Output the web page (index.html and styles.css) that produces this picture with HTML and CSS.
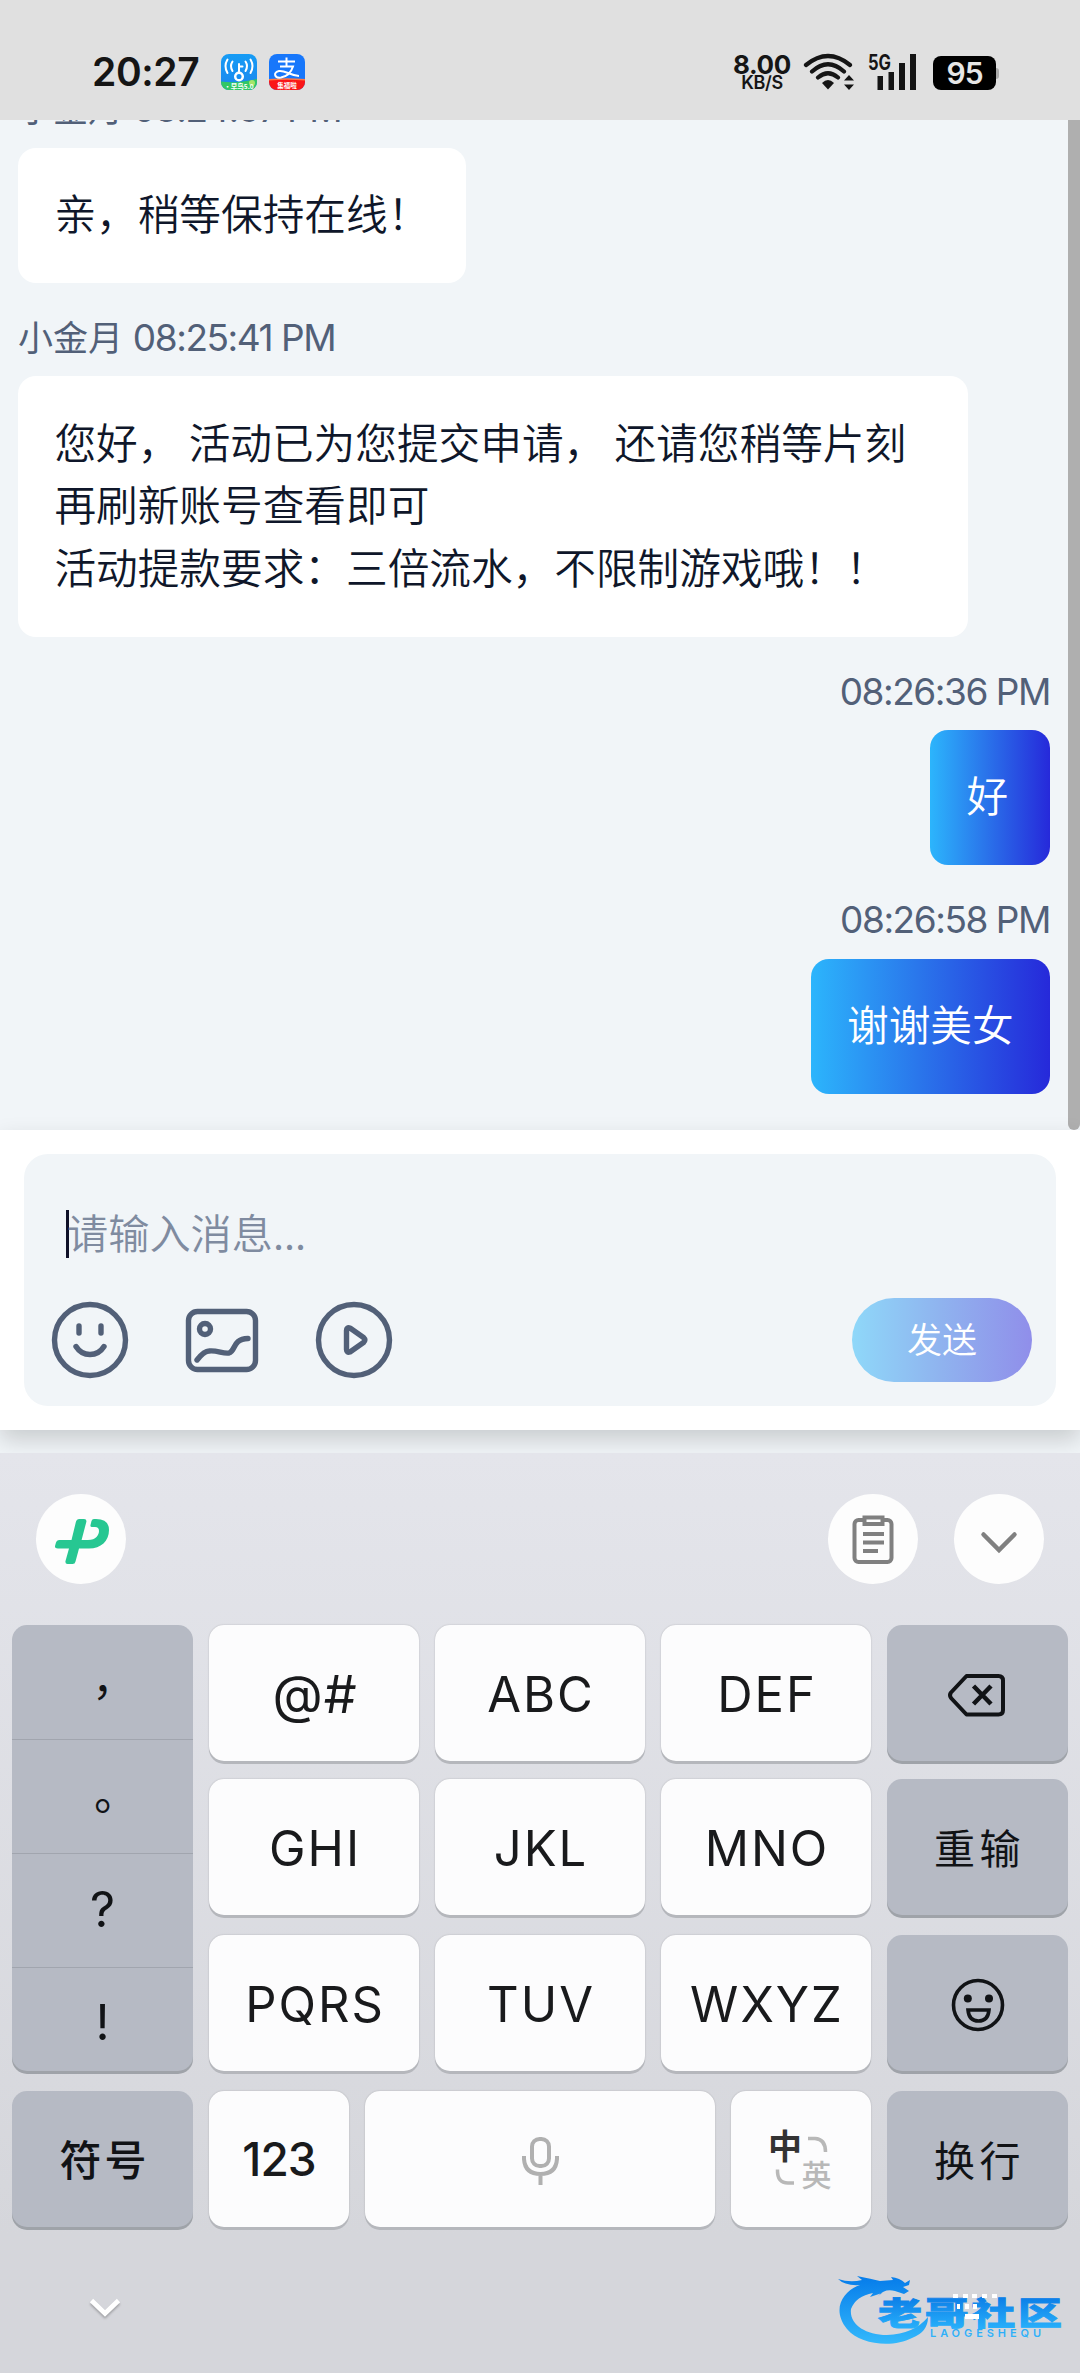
FILE: index.html
```html
<!DOCTYPE html>
<html lang="zh-CN">
<head>
<meta charset="utf-8">
<title>在线客服</title>
<link rel="stylesheet" href="styles.css">
</head>
<body>
<header class="status">
  <span class="clock">20:27</span>
  <svg class="app" viewBox="0 0 36 36">
    <defs>
      <linearGradient id="wifiApp" x1="0" y1="0" x2="0" y2="1"><stop offset="0" stop-color="#169cf5"/><stop offset="1" stop-color="#1c86ee"/></linearGradient>
      <clipPath id="appShape"><rect width="36" height="36" rx="8"/></clipPath>
    </defs>
    <g clip-path="url(#appShape)">
      <rect width="36" height="36" fill="url(#wifiApp)"/>
      <path d="M0 27.500Q14 30 36 25V36H0Z" fill="#32c765"/>
      <circle cx="31" cy="29" r="3" fill="#a5e56a"/>
      <g fill="none" stroke="#fff" stroke-width="2" stroke-linecap="round">
        <path d="M6.500 5.500Q2.500 12 6.500 19M11.500 7.500Q8.500 12 11.500 17M29.500 5.500Q33.500 12 29.500 19M24.500 7.500Q27.500 12 24.500 17"/>
        <circle cx="18" cy="22.500" r="3.800" stroke-width="2.500"/><path d="M18 18.500V10M18 12.500H21.500"/>
      </g>
      <text class="app-tag" x="18" y="34.500">·早鸟5.0</text>
    </g>
  </svg>
  <svg class="app app-pay" viewBox="0 0 36 36">
    <g clip-path="url(#appShape)">
      <rect width="36" height="36" fill="#1777fb"/>
      <path d="M0 26Q18 24 36 26V36H0Z" fill="#fa1518"/>
      <path d="M0 25Q18 23.500 36 25V26.500Q18 25 0 26.500Z" fill="#ff7a45"/>
      <g fill="none" stroke="#fff" stroke-width="2">
        <path d="M17.500 3.500V12M9 7.500H26M11 12.500H24Q21 22 12 23.500C5 24.500 4 18 10 17C16 16 21 21.500 30 22"/>
      </g>
      <text class="app-tag" x="18" y="34">集福啦</text>
    </g>
  </svg>
  <span class="speed"><b>8.00</b><i>KB/S</i></span>
  <svg class="wifi" viewBox="803 53 53 38">
    <g fill="none" stroke="#151515" stroke-width="4.200" stroke-linecap="round">
      <path d="M806 65Q828 47 850 65M812 71.500Q828 57 844 71.500M818 77.500Q828 69 838 77.500"/>
    </g>
    <path d="M822 83Q828 77 834 83L828 89.500Z" fill="#151515"/>
    <path d="M849 75L854 80.500H844ZM849 90L854 84.500H844Z" fill="#151515"/>
  </svg>
  <svg class="signal" viewBox="867 53 51 38">
    <text class="signal-kind" x="868" y="69.500" textLength="23" lengthAdjust="spacingAndGlyphs">5G</text>
    <path d="M877.500 76h5.500v14h-5.500zM888.500 72h5.500v18h-5.500zM899 63h6v27h-6zM910 54h6v36h-6z" fill="#151515"/>
  </svg>
  <span class="battery">95</span>
</header>

<main class="chat">
  <div class="log">
    <div class="label">小金月 <span class="time">08:24:57 PM</span></div>
    <div class="bubble">亲，稍等保持在线！</div>
    <div class="label">小金月 <span class="time">08:25:41 PM</span></div>
    <div class="bubble bubble-wide">您好， 活动已为您提交申请， 还请您稍等片刻<br>再刷新账号查看即可<br>活动提款要求：三倍流水，不限制游戏哦！！</div>
    <div class="label mine"><span class="time">08:26:36 PM</span></div>
    <div class="bubble sent mine">好</div>
    <div class="label mine"><span class="time">08:26:58 PM</span></div>
    <div class="bubble sent mine">谢谢美女</div>
  </div>
  <div class="scrollbar"></div>
</main>

<section class="composer">
  <div class="panel">
    <div class="input"><span class="caret"></span><span class="placeholder">请输入消息...</span></div>
    <div class="tools">
      <svg class="tool" viewBox="0 0 80 80"><circle cx="40" cy="40" r="35.500"/><path d="M29 26v7M51 26v7M26 46.500Q31 54.500 40 54.500T54 46.500"/></svg>
      <svg class="tool" viewBox="0 0 80 80"><rect x="6.500" y="11.500" width="67" height="58" rx="9"/><circle cx="23" cy="29" r="5.500"/><path d="M15 60Q22 51 27 51C35 50 41 54 47 53C54 51 50 39 66 38.500"/></svg>
      <svg class="tool" viewBox="0 0 80 80"><circle cx="40" cy="40" r="35.500"/><path d="M32.500 30.500Q32.500 27 36 28L49.500 37.500Q52 40 49.500 42.500L36 52Q32.500 53 32.500 49.500Z"/></svg>
      <button class="send">发送</button>
    </div>
  </div>
</section>

<section class="keyboard">
  <div class="bar">
    <span class="round"><svg viewBox="36 1494 90 90" fill="#27c792"><path d="M79 1519H84Q87 1519 86.300 1522L81.600 1540H88C96 1540 99 1535 99 1531Q99 1527 95 1527H92Q90 1527 90.500 1525L91.500 1521Q92 1519 94 1519H96Q109 1519 109 1530C109 1541 101 1548.500 89 1548.500H79L75.500 1561.500Q75 1564 72.500 1564H67.500Q65 1564 65.500 1561L69 1548.500H58Q54.500 1548.500 55 1546L56 1542.500Q56.500 1540 59 1540H71.500L76 1521.500Q76.500 1519 79 1519Z"/></svg></span>
    <span class="round clip"><svg viewBox="828 1494 90 90" fill="none" stroke="#808080" stroke-width="4"><rect x="854.500" y="1520" width="37" height="42" rx="4"/><rect x="864.500" y="1517.500" width="18" height="6.500" fill="#fff" stroke-width="4"/><path d="M863 1534H884M863 1542.500H884M863 1551H878"/></svg></span>
    <span class="round"><svg viewBox="954 1494 90 90" fill="none" stroke="#808080" stroke-width="4.500" stroke-linecap="round"><path d="M983.500 1534.500L999 1550L1014.500 1534.500"/></svg></span>
  </div>
  <div class="keys">
    <div class="key dark marks">
      <span class="cjk-mark">，</span><span class="cjk-mark stop">。</span><span>?</span><span class="bang">!</span>
    </div>
    <div class="key at">@#</div><div class="key">ABC</div><div class="key">DEF</div>
    <div class="key dark"><svg class="glyph" viewBox="940.500 1663 74 60" fill="none" stroke="#111316" stroke-width="4" stroke-linejoin="round"><path d="M965 1675H997Q1001.500 1675 1001.500 1679.500V1709Q1001.500 1713.500 997 1713.500H965L949.500 1697Q947.500 1694 949.500 1691.500Z"/><path d="M972 1685L989.500 1703M989.500 1685L972 1703" stroke-width="4.500"/></svg></div>
    <div class="key">GHI</div><div class="key">JKL</div><div class="key">MNO</div>
    <div class="key dark word">重输</div>
    <div class="key">PQRS</div><div class="key">TUV</div><div class="key">WXYZ</div>
    <div class="key dark"><svg class="glyph" viewBox="940.500 1973 74 60" fill="none" stroke="#111316" stroke-width="3.600"><circle cx="976.500" cy="2004" r="24.500"/><circle cx="966.300" cy="1997.500" r="4" fill="#111316" stroke="none"/><circle cx="987.500" cy="1997.500" r="4" fill="#111316" stroke="none"/><path d="M966.500 2009H987.500Q986.500 2020 977 2020T966.500 2009Z"/></svg></div>
  </div>
  <div class="keys-bottom">
    <div class="key dark word side symbols">符号</div>
    <div class="key num">123</div>
    <div class="key space"><svg class="mic" viewBox="515 2130 50 60" fill="none" stroke="#b0b0b0" stroke-width="4"><rect x="532" y="2140" width="17" height="27" rx="7.500"/><path d="M524 2157V2160Q525 2175 540.500 2175T557 2160V2157M540.500 2175V2186"/></svg></div>
    <div class="key lang"><svg class="lang-icon" viewBox="731 2091 140 136"><text class="lang-on" x="785" y="2159">中</text><text class="lang-off" x="816.500" y="2186">英</text><path d="M808 2138.500H815Q825.500 2139 825.500 2152M777.500 2169.500Q777 2183 788 2183H794" fill="none" stroke="#b8b8b8" stroke-width="3.500"/></svg></div>
    <div class="key dark word side">换行</div>
  </div>
  <footer class="nav">
    <svg class="hide" viewBox="0 0 40 30" fill="none" stroke="#fff" stroke-width="4.800"><path d="M6.500 6.500L20 19.500L33.500 6.500"/></svg>
    <svg class="brand" viewBox="832 2270 236 80">
      <defs>
        <linearGradient id="brandBlue" gradientUnits="userSpaceOnUse" x1="0" y1="2280" x2="0" y2="2342"><stop offset="0" stop-color="#087feb"/><stop offset="1" stop-color="#32b7fb"/></linearGradient>
        <linearGradient id="nameBlue" gradientUnits="userSpaceOnUse" x1="0" y1="-36" x2="0" y2="4"><stop offset="0" stop-color="#0d80e8"/><stop offset="1" stop-color="#27aefa"/></linearGradient>
      </defs>
      <g fill="url(#brandBlue)">
        <path d="M838 2279Q850 2283 862 2280L857 2276Q872 2279 880 2281L893 2280L891 2277Q900 2278 905 2283L910 2280L909 2285L903 2287L909 2291L904 2294L895 2291Q885 2288 878 2296L882 2293L870 2297L873 2293Q856 2296 851 2309C849 2324 865 2335 887 2335Q914 2334 928 2317Q928 2332 912 2338C893 2348 860 2345 847 2329C831 2309 843 2291 860 2285Q845 2286 838 2279Z"/>
        <g transform="translate(0 2324.500) scale(1 .72)"><text class="brand-name" x="878" y="0" textLength="184" fill="url(#nameBlue)" stroke="url(#nameBlue)">老哥社区</text></g>
        <text class="brand-sub" x="930" y="2337" textLength="111">LAOGESHEQU</text>
      </g>
      <path d="M953 2294h5v4h-5zM963 2294h5v4h-5zM972 2294h5v4h-5zM982 2294h5v4h-5zM992 2294h5v4h-5zM957 2304h3v5h-3zM965 2304h4v5h-4zM973 2304h4v5h-4zM965 2314h14v5h-14z" fill="#fff"/>
    </svg>
  </footer>
</section>
</body>
</html>
```
FILE: styles.css
```css
* { box-sizing: border-box; }
body {
  margin: 0;
  width: 1080px;
  height: 2373px;
  overflow: hidden;
  display: flex;
  flex-direction: column;
  font-family: Inter, "Noto Sans CJK SC", sans-serif;
  background: #f1f5f8;
}
svg { display: block; flex: none; }

/* status bar */
.status {
  flex: none;
  height: 120px;
  padding: 24px 81px 0 92px;
  display: flex;
  align-items: center;
  background: #e0e0e0;
  color: #151515;
}
.clock { width: 129px; font-size: 39px; font-weight: 600; letter-spacing: -.4px; line-height: 40px; }
.app { width: 36px; height: 36px; }
.app-pay { margin-left: 12px; }
.app-tag { font: 700 6.5px "Noto Sans CJK SC", sans-serif; fill: #fff; text-anchor: middle; }
.speed { margin-left: auto; width: 60px; display: flex; flex-direction: column; align-items: center; }
.speed b { font-size: 26px; line-height: 21px; font-weight: 700; letter-spacing: -.3px; }
.speed i { font-style: normal; font-size: 18px; line-height: 16px; font-weight: 600; letter-spacing: -.4px; }
.wifi { width: 53px; height: 38px; margin-left: 11px; }
.signal { width: 51px; height: 38px; margin-left: 11px; }
.signal-kind { font: 700 21px Inter, sans-serif; fill: #151515; }
.battery {
  position: relative;
  margin: 2px 3px 0 15px;
  width: 63px;
  height: 34px;
  border-radius: 8px;
  background: #000;
  color: #e6e6e6;
  font-size: 30px;
  font-weight: 600;
  letter-spacing: -1px;
  line-height: 35px;
  text-align: center;
}
.battery::after {
  content: "";
  position: absolute;
  left: 63px;
  top: 12px;
  width: 3px;
  height: 11px;
  border-radius: 0 3px 3px 0;
  background: #aaa;
}

/* conversation */
.chat { flex: none; height: 1010px; display: flex; overflow: hidden; background: #f1f5f8; }
.log {
  flex: 1;
  padding: 0 18px 36px;
  display: flex;
  flex-direction: column;
  justify-content: flex-end;
  align-items: flex-start;
}
.label { flex: none; margin: 29px 0 12.4px; height: 52px; line-height: 52px; font-size: 35px; color: #526078; white-space: pre; }
.time { font-size: 37px; letter-spacing: -1.45px; }
.bubble {
  flex: none;
  padding: 33.4px 36.4px 39.4px;
  border-radius: 18px;
  background: #fff;
  color: #0f172a;
  font: 350 41.67px/62.5px "Noto Sans CJK SC", sans-serif;
  white-space: nowrap;
}
.bubble-wide { width: 950px; }
.mine { align-self: flex-end; }
.sent { min-width: 120px; color: #fff; background: linear-gradient(90deg, #2cb5fc, #2a76eb 45%, #2629da); }
.scrollbar { width: 12px; border-radius: 0 0 6px 6px; background: #afafaf; }

/* composer */
.composer {
  position: relative;
  flex: none;
  height: 300px;
  padding: 24px;
  background: #fff;
  box-shadow: 0 10px 22px rgba(0, 0, 0, .17);
}
.panel { height: 252px; border-radius: 24px; background: #f1f5f8; padding: 48px 24px 24px 42px; }
.input { display: flex; align-items: center; height: 64px; color: #7f8ba0; font: 350 41.2px/62px "Noto Sans CJK SC", sans-serif; }
.caret { width: 3px; height: 48px; background: #0f1028; }
.placeholder { margin: -7px 0 0 -2px; }
.tools { display: flex; align-items: center; margin: 32px 0 0 -16px; }
.tool { width: 80px; height: 80px; margin-right: 52px; fill: none; stroke: #526078; stroke-width: 5.4; stroke-linecap: round; stroke-linejoin: round; }
.send {
  margin-left: auto;
  width: 180px;
  height: 84px;
  padding: 0 0 5px;
  border: 0;
  border-radius: 42px;
  color: #fff;
  font: 350 35px "Noto Sans CJK SC", sans-serif;
  background: linear-gradient(90deg, #8fd8f9, #8fb4ef 48%, #908eea);
}

/* keyboard */
.keyboard {
  position: relative;
  flex: none;
  margin-top: 23px;
  height: 920px;
  padding: 41px 12px 0;
  background: linear-gradient(#e4e5eb, #d5d6db 85%);
}
.bar { display: flex; padding: 0 24px; height: 131px; }
.round { width: 90px; height: 90px; border-radius: 50%; background: #fdfdfd; }
.clip { margin: 0 36px 0 auto; }
.keys {
  display: grid;
  grid-template-columns: 181px 210px 210px 210px 181px;
  grid-template-rows: 154px 156px 156px;
  column-gap: 16px;
}
.key {
  height: 136px;
  border-radius: 15px;
  display: flex;
  align-items: center;
  justify-content: center;
  padding: 2px 0 0 2px;
  background: #fcfcfd;
  box-shadow: 0 3px 0 #b5b7bc, 0 0 2px rgba(0, 0, 0, .2);
  color: #191a1c;
  font-size: 49px;
  letter-spacing: 2px;
}
.at { font-size: 52px; letter-spacing: 1px; }
.dark { background: #b6bac4; color: #111316; box-shadow: 0 3px 0 #9fa3a9; }
.marks { grid-row: span 3; height: 446px; padding: 0; flex-direction: column; letter-spacing: 0; }
.marks span { width: 100%; height: 114px; line-height: 112px; text-align: center; border-top: 1px solid #a1a5ae; }
.marks span:first-child { border-top-color: transparent; }
.marks .cjk-mark { font-family: "Noto Sans CJK TC", sans-serif; font-size: 44px; line-height: 129px; }
.marks .stop { line-height: 128px; }
.marks .bang { height: 104px; line-height: 110px; }
.word { padding: 0 0 3px; font: 41px "Noto Sans CJK SC", sans-serif; letter-spacing: 4.500px; text-indent: 4px; }
.symbols { font-size: 42px; font-weight: 500; letter-spacing: 3px; }
.glyph { width: 74px; height: 60px; }
.keys-bottom { display: flex; gap: 16px; }
.side { width: 181px; }
.num { width: 140px; padding: 0; font-size: 46px; letter-spacing: -1px; font-weight: 450; }
.space { width: 350px; padding: 0; }
.mic { width: 50px; height: 60px; }
.lang { width: 140px; padding: 0; }
.lang-icon { width: 140px; height: 136px; }
.lang-on { font: 700 34px "Noto Sans CJK SC", sans-serif; fill: #333; text-anchor: middle; letter-spacing: 0; }
.lang-off { font: 500 30px "Noto Sans CJK SC", sans-serif; fill: #b8b8b8; text-anchor: middle; letter-spacing: 0; }
.nav { display: flex; justify-content: space-between; padding: 43px 0 0 73px; }
.hide { width: 40px; height: 30px; margin-top: 24px; filter: drop-shadow(0 2px 1px rgba(0, 0, 0, .25)); }
.brand { width: 236px; height: 80px; }
.brand-name { font: 900 44px "Noto Sans CJK SC", sans-serif; stroke-width: 1.2; }
.brand-sub { font: 600 11px Inter, sans-serif; }
```
